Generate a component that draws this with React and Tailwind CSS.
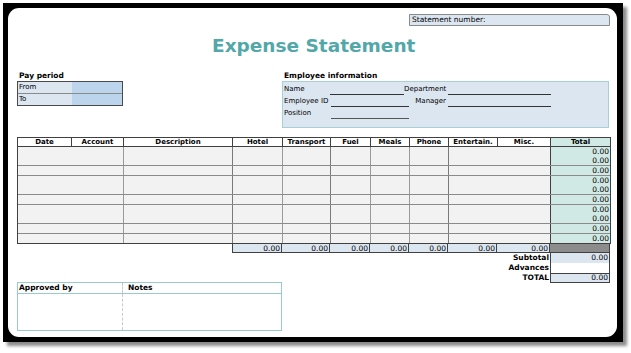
export default function App() {
  const headers = [
    ["Date", "w-[54px]"],
    ["Account", "w-[52px]"],
    ["Description", "w-[109px]"],
    ["Hotel", "w-[50px]"],
    ["Transport", "w-[48px]"],
    ["Fuel", "w-[40px]"],
    ["Meals", "w-[39px]"],
    ["Phone", "w-[39px]"],
    ["Entertain.", "w-[49px]"],
    ["Misc.", "w-[53px]"],
  ];
  const bodyCols = ["w-[106px]", "w-[109px]", "w-[50px]", "w-[48px]", "w-[40px]", "w-[39px]", "w-[39px]", "w-[102px]"];
  const groups = [
    { h: "h-[19px] border-b", n: 2 },
    { h: "h-[10px] border-b", n: 1 },
    { h: "h-[19px] border-b", n: 2 },
    { h: "h-[10px] border-b", n: 1 },
    { h: "h-[19px] border-b", n: 2 },
    { h: "h-[10px] border-b", n: 1 },
    { h: "h-[9px]", n: 1 },
  ];
  const totals = ["w-[50px]", "w-[48px]", "w-[40px]", "w-[39px]", "w-[39px]", "w-[49px]", "w-[53px]"];

  return (
    <div className="w-[631px] h-[353px] bg-white font-['DejaVu_Sans',sans-serif] text-black pt-[3px] pl-[3px]">
      <div className="w-[620px] h-[339px] bg-black pt-[5px] pl-[5px] shadow-[4px_4px_3px_rgba(0,0,0,0.45)]">
        <div className="w-[609px] h-[329px] bg-white rounded-[11px] pl-[9px] flex flex-col">
          {/* Statement number */}
          <div className="mt-[6px] ml-[392px] w-[201px] h-[12px] bg-[#dce6f1] border border-[#8a8a8a] rounded-tr-[3px] pl-[2px] text-[7.5px] leading-[10px]">
            Statement number:
          </div>

          {/* Title */}
          <div className="mt-[9px] ml-[195px] h-[22px] text-[18.5px] leading-[22px] font-bold text-[#52a8a9] whitespace-nowrap">
            Expense Statement
          </div>

          {/* Info row */}
          <div className="mt-[14px] flex items-start">
            <div className="w-[106px] flex flex-col">
              <div className="h-[10px] pl-[2px] text-[7.5px] leading-[10px] font-bold">Pay period</div>
              <div className="h-[25px] border border-[#4a4a4a] flex flex-col text-[7px] leading-[11px]">
                <div className="h-[12px] flex border-b border-[#8a8a8a]">
                  <div className="w-[54px] bg-[#dce6f1] pl-[1px]">From</div>
                  <div className="flex-1 bg-[#bcd5ec]"></div>
                </div>
                <div className="h-[11px] flex">
                  <div className="w-[54px] bg-[#dce6f1] pl-[1px]">To</div>
                  <div className="flex-1 bg-[#bcd5ec]"></div>
                </div>
              </div>
            </div>

            <div className="ml-[159px] w-[327px] flex flex-col">
              <div className="h-[10px] pl-[2px] text-[7.5px] leading-[10px] font-bold">Employee information</div>
              <div className="h-[47px] border border-[#a9cfd6] bg-[#dce6f1] pt-[1px] text-[7px] leading-[12px] flex flex-col">
                <div className="h-[12px] flex">
                  <div className="w-[47px] pl-[1px]">Name</div>
                  <div className="w-[74px] h-[12px] border-b border-[#333]"></div>
                  <div className="w-[44px] text-right pr-[2px]">Department</div>
                  <div className="w-[103px] h-[12px] border-b border-[#333]"></div>
                </div>
                <div className="h-[12px] flex">
                  <div className="w-[48px] pl-[1px]">Employee ID</div>
                  <div className="w-[78px] h-[12px] border-b border-[#333]"></div>
                  <div className="w-[39px] text-right pr-[2px]">Manager</div>
                  <div className="w-[103px] h-[12px] border-b border-[#333]"></div>
                </div>
                <div className="h-[12px] flex">
                  <div className="w-[48px] pl-[1px]">Position</div>
                  <div className="w-[78px] h-[12px] border-b border-[#555]"></div>
                </div>
              </div>
            </div>
          </div>

          {/* Main table */}
          <div className="mt-[9px] w-[594px] border border-[#404040] flex flex-col">
            <div className="h-[9px] flex border-b border-[#404040] text-[7px] leading-[8px] font-bold">
              {headers.map(([t, w]) => (
                <div key={t} className={`${w} border-r border-[#404040] text-center bg-white`}>
                  {t}
                </div>
              ))}
              <div className="flex-1 text-center bg-[#d1e9e4]">Total</div>
            </div>
            {groups.map((g, i) => (
              <div key={i} className={`${g.h} border-[#8a8a8a] flex`}>
                {bodyCols.map((w, j) => (
                  <div
                    key={j}
                    className={`${w} h-full bg-[#f2f2f2] border-r ${j === 7 ? "border-[#404040]" : j === 1 || j === 3 || j === 6 ? "border-[#7a7a7a]" : "border-[#9a9a9a]"}`}
                  ></div>
                ))}
                <div className="flex-1 h-full bg-[#d1e9e4] flex flex-col text-[7.5px] leading-[9px] text-right pr-[1px]">
                  {Array.from({ length: g.n }).map((_, k) => (
                    <div key={k}>0.00</div>
                  ))}
                </div>
              </div>
            ))}
          </div>

          {/* Totals row */}
          <div className="flex h-[9px] text-[7.5px] leading-[9px]">
            <div className="w-[215px]"></div>
            {totals.map((w, i) => (
              <div
                key={i}
                className={`${w} h-full bg-[#dce6f1] border-b border-r border-[#404040] ${i === 0 ? "border-l" : ""} text-right pr-[1px]`}
              >
                0.00
              </div>
            ))}
            <div className="w-[60px] h-full bg-[#8c8c8c] border-b border-r border-[#404040]"></div>
          </div>

          {/* Bottom area */}
          <div className="flex items-start">
            <div className="mt-[29px] w-[265px] h-[49px] border border-[#95cccc] flex flex-col">
              <div className="h-[11px] flex border-b border-[#95cccc] text-[7.5px] leading-[10px] font-bold">
                <div className="w-[105px] pl-[1px] border-r border-dashed border-[#c8c8c8]">Approved by</div>
                <div className="flex-1 pl-[5px]">Notes</div>
              </div>
              <div className="flex-1 flex">
                <div className="w-[105px] border-r border-dashed border-[#c8c8c8]"></div>
                <div className="flex-1"></div>
              </div>
            </div>

            <div className="w-[328px] flex flex-col text-[7.5px] leading-[10px]">
              <div className="h-[10px] flex">
                <div className="w-[268px] text-right pr-[1px] font-bold">Subtotal</div>
                <div className="w-[60px] bg-[#dce6f1] border-x border-[#404040] text-right pr-[1px]">0.00</div>
              </div>
              <div className="h-[10px] flex">
                <div className="w-[268px] text-right pr-[1px] font-bold">Advances</div>
                <div className="w-[60px] bg-white border-x border-[#404040]"></div>
              </div>
              <div className="h-[10px] flex">
                <div className="w-[268px] text-right pr-[1px] font-bold">TOTAL</div>
                <div className="w-[60px] bg-[#dce6f1] border border-[#404040] text-right pr-[1px] leading-[8px]">0.00</div>
              </div>
            </div>
          </div>
        </div>
      </div>
    </div>
  );
}
